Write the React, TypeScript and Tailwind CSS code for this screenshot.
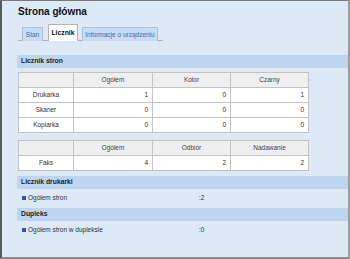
import React from "react";

const font = { fontFamily: '"Liberation Sans", Arial, sans-serif' };

function Grid({ header, rows }: { header: string[]; rows: string[][] }) {
  return (
    <div className="grid grid-cols-[55px_79px_78px_78px] w-[291px] border-l border-t border-[#c3c3c3]">
      {header.map((h, i) => (
        <div
          key={"h" + i}
          className="h-[15px] bg-[#efefef] border-r border-b border-[#c3c3c3] flex items-center justify-center text-[6.5px] text-[#444]"
        >
          {h}
        </div>
      ))}
      {rows.map((r, ri) =>
        r.map((c, ci) => (
          <div
            key={ri + "-" + ci}
            className={
              "h-[15px] bg-white border-r border-b border-[#c3c3c3] flex items-center text-[6.5px] text-[#333] " +
              (ci === 0 ? "justify-center" : "justify-end pr-[4px]")
            }
          >
            {c}
          </div>
        ))
      )}
    </div>
  );
}

function Band({ children }: { children: React.ReactNode }) {
  return (
    <div className="h-[13px] bg-[#bdd5ee] flex items-center pl-[4px] text-[6.8px] font-bold text-[#222]">
      {children}
    </div>
  );
}

function Item({ label, value }: { label: string; value: string }) {
  return (
    <div className="h-[16px] flex items-center text-[6.5px] text-[#333]">
      <div className="w-[182px] flex items-center pl-[5px] gap-[2px]">
        <span className="w-[4px] h-[4px] bg-[#3a4f9e]" />
        <span>{label}</span>
      </div>
      <span>{value}</span>
    </div>
  );
}

export default function App() {
  return (
    <div
      style={font}
      className="w-[350px] h-[259px] overflow-hidden bg-[#dde9f5] border-t border-l-2 border-r-2 border-b-2 border-t-[#7a7a7a] border-l-[#5a5a5a] border-r-[#9c9c9c] border-b-[#8c8c8c] pl-[15px]"
    >
      <div className="mt-[4px] h-[13px] flex items-center pl-[1px] text-[10px] font-bold text-[#111]">
        Strona główna
      </div>
      <div className="mt-[6px] ml-[1px] w-[145px] h-[17px] flex items-end border-b border-[#b4b4b4]">
        <div className="ml-[4px] w-[21px] h-[14px] -mb-px bg-[#c9ddf2] border border-b-0 border-[#aebfd3] flex items-center justify-center text-[6.5px] text-[#3367c0]">
          Stan
        </div>
        <div className="ml-[5px] w-[30px] h-[17px] -mb-px bg-white border border-b-0 border-[#b4b4b4] flex items-center justify-center text-[6.8px] font-bold text-[#111]">
          Licznik
        </div>
        <div className="ml-[4px] w-[76px] h-[14px] -mb-px bg-[#c9ddf2] border border-b-0 border-[#aebfd3] flex items-center justify-center text-[6.5px] text-[#3367c0]">
          Informacje o urządzeniu
        </div>
      </div>
      <div className="mt-[14px]">
        <Band>Licznik stron</Band>
      </div>
      <div className="mt-[4px] pl-[1px]">
        <Grid
          header={["", "Ogółem", "Kolor", "Czarny"]}
          rows={[
            ["Drukarka", "1", "0", "1"],
            ["Skaner", "0", "0", "0"],
            ["Kopiarka", "0", "0", "0"],
          ]}
        />
      </div>
      <div className="mt-[7px] pl-[1px]">
        <Grid
          header={["", "Ogółem", "Odbiór", "Nadawanie"]}
          rows={[["Faks", "4", "2", "2"]]}
        />
      </div>
      <div className="mt-[5px]">
        <Band>Licznik drukarki</Band>
      </div>
      <div className="mt-[1px]">
        <Item label="Ogółem stron" value=":2" />
      </div>
      <div className="mt-[2px]">
        <Band>Dupleks</Band>
      </div>
      <div className="mt-[1px]">
        <Item label="Ogółem stron w dupleksie" value=":0" />
      </div>
    </div>
  );
}
